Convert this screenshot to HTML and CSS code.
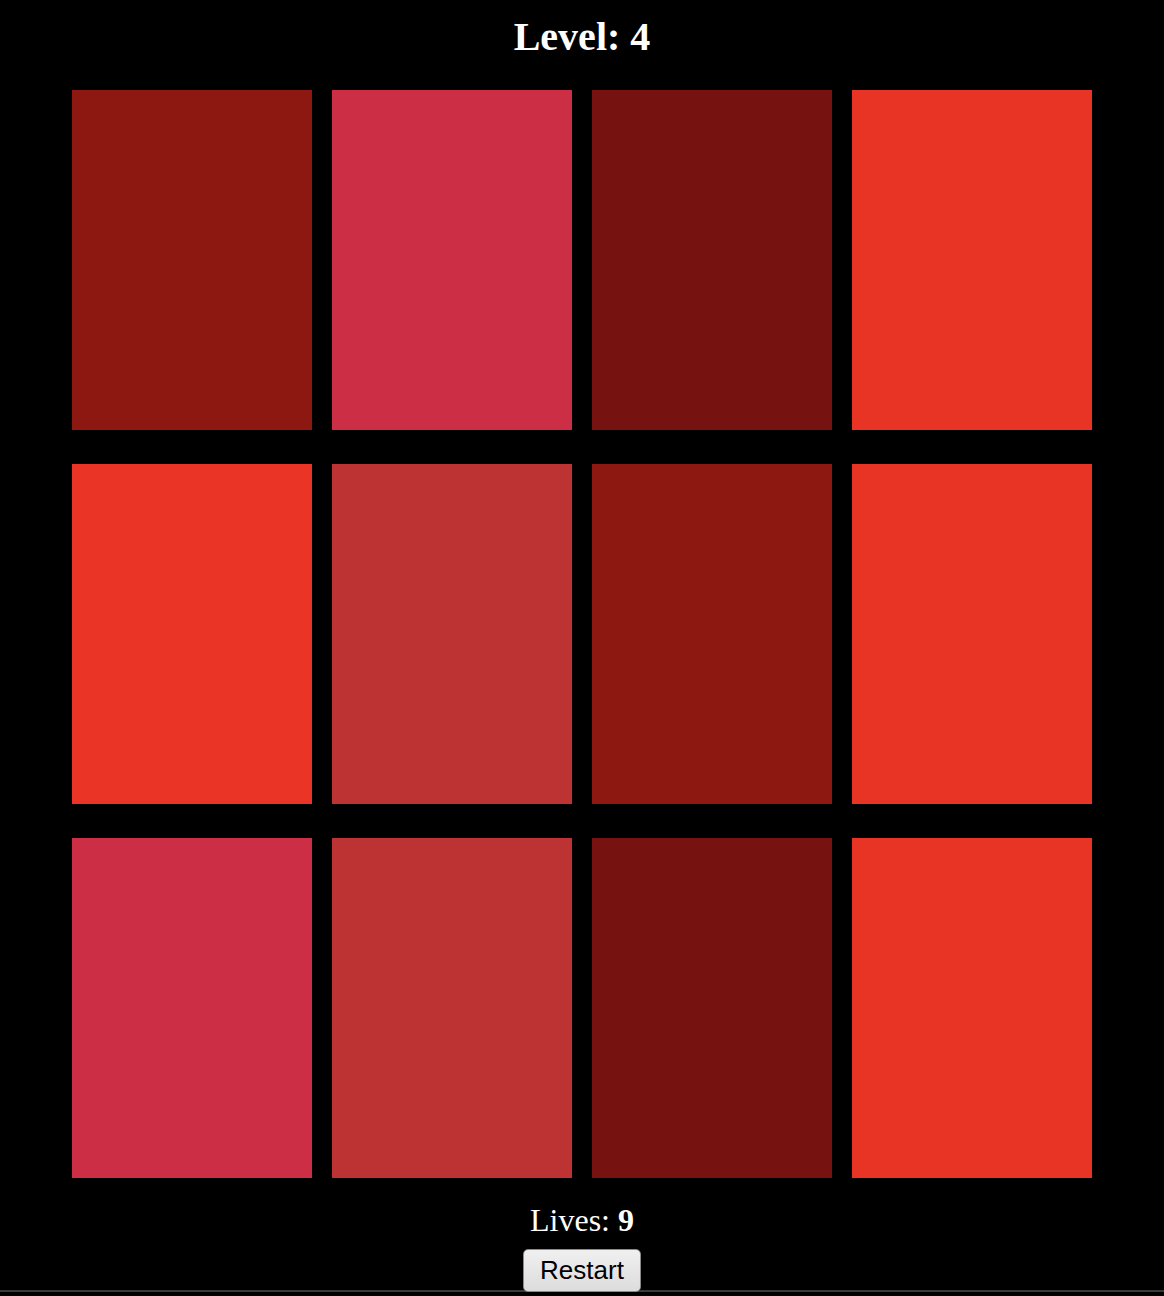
FILE: index.html
```html
<!DOCTYPE html>
<html>
<head>
<meta charset="utf-8">
<link rel="stylesheet" href="styles.css">
</head>
<body>
<h1 class="level">Level: 4</h1>
<div class="grid">
  <div class="tile c1"></div>
  <div class="tile c2"></div>
  <div class="tile c3"></div>
  <div class="tile c4"></div>
  <div class="tile c5"></div>
  <div class="tile c6"></div>
  <div class="tile c1"></div>
  <div class="tile c4"></div>
  <div class="tile c2"></div>
  <div class="tile c6"></div>
  <div class="tile c3"></div>
  <div class="tile c4"></div>
</div>
<p class="lives">Lives: <b>9</b></p>
<div class="actions"><button class="restart">Restart</button></div>
<div class="edge"></div>
</body>
</html>
```
FILE: styles.css
```css
html, body {
  margin: 0;
  padding: 0;
  background: #000;
}
body {
  font-family: "Liberation Serif", "Times New Roman", serif;
  color: #fff;
  height: 1296px;
  overflow: hidden;
}
.level {
  margin: 14px 0 30px;
  font-size: 40px;
  line-height: 46px;
  font-weight: bold;
  text-align: center;
}
.grid {
  width: 1020px;
  margin: 0 auto;
  display: grid;
  grid-template-columns: repeat(4, 240px);
  grid-auto-rows: 340px;
  column-gap: 20px;
  row-gap: 34px;
}
.c1 { background: #8c1811; }
.c2 { background: #cc2f45; }
.c3 { background: #76120f; }
.c4 { background: #e83425; }
.c5 { background: #ea3526; }
.c6 { background: #bd3333; }
.lives {
  margin: 24px 0 10px;
  font-size: 32px;
  line-height: 37px;
  text-align: center;
}
.actions {
  display: flex;
  justify-content: center;
}
.restart {
  font-family: "Liberation Sans", Arial, sans-serif;
  font-size: 26px;
  height: 43px;
  padding: 0 16px;
  background: linear-gradient(#f0f0f0, #dcdcdc);
  color: #000;
  border: 1px solid #8a8a8a;
  border-radius: 5px;
}
.edge {
  height: 2px;
  background: #3a3a3a;
  margin-top: -2px;
}
```
